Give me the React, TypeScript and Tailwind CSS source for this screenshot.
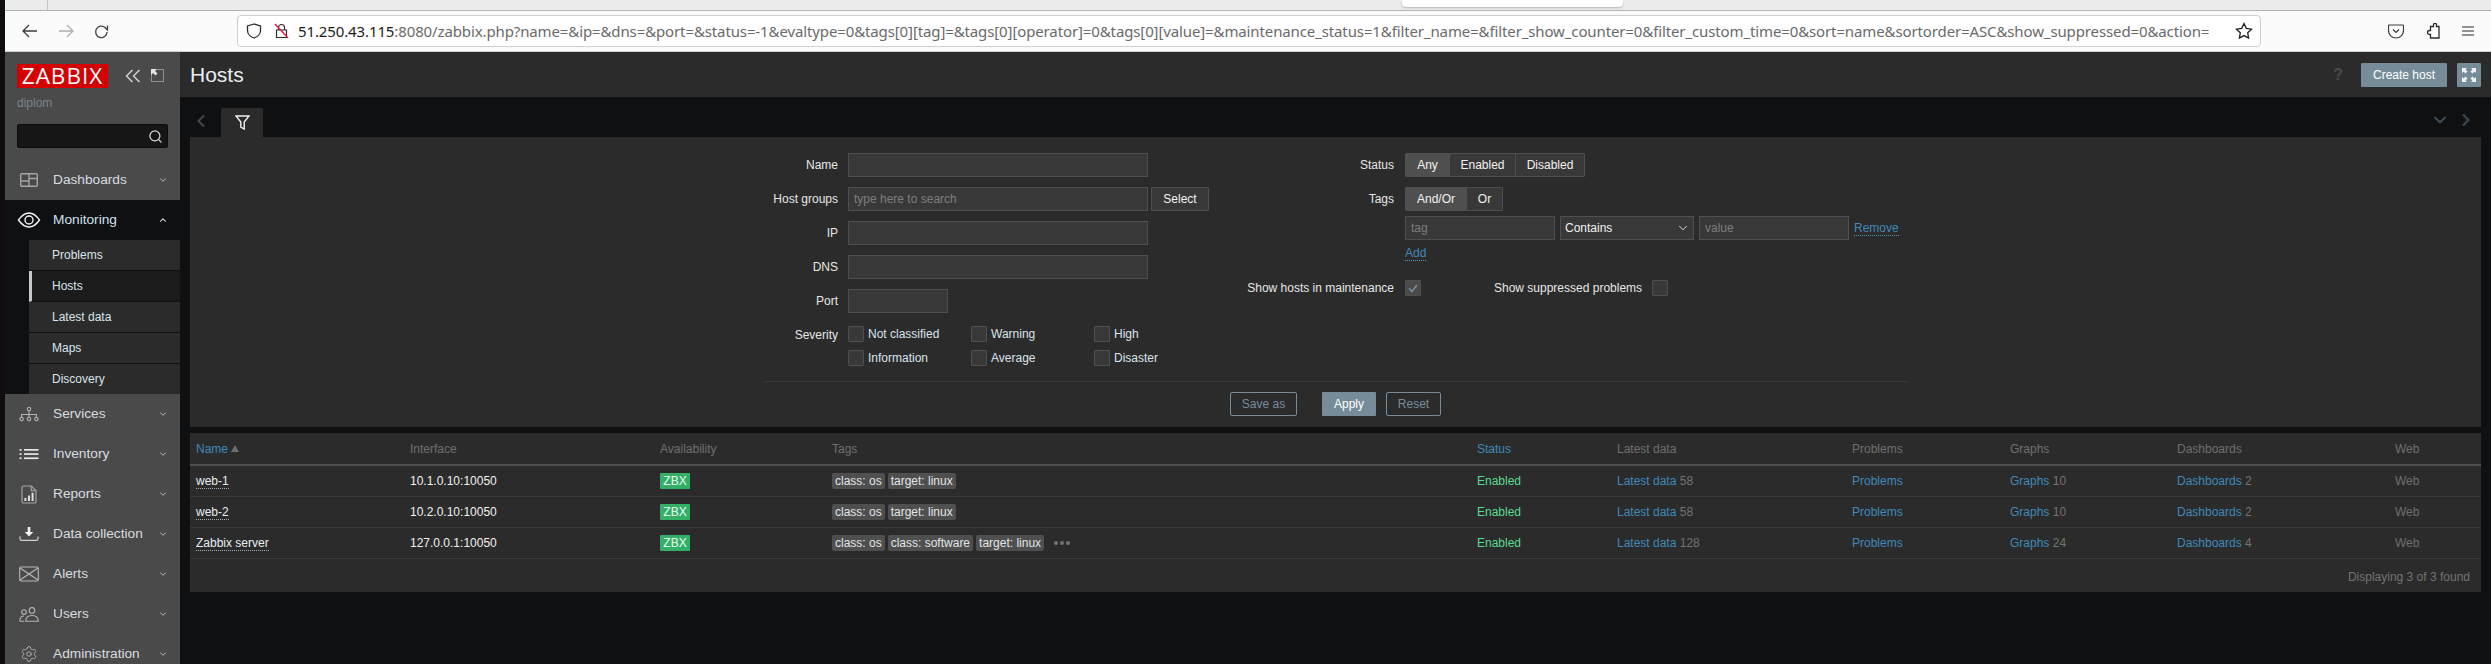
import { ReactNode } from 'react'
import { ChevronDown, ChevronLeft, ChevronRight, ChevronUp, Search, Settings } from 'lucide-react'

const arial = "font-['Liberation_Sans',Arial,sans-serif]"

function DashboardsIcon() {
  return (
    <svg width="20" height="16" viewBox="0 0 20 16" fill="none" stroke="#a5a5a5" strokeWidth="1.4">
      <rect x="1.7" y="1.7" width="16.6" height="12.6" rx="1" />
      <path d="M10 1.7v12.6M1.7 9h8.3M10 6.5h8.3" />
    </svg>
  )
}

function EyeIcon() {
  return (
    <svg width="24" height="16" viewBox="0 0 24 16" fill="none" stroke="#f2f2f2" strokeWidth="1.4">
      <path d="M1.5 8C5 3 8.5 1 12 1s7 2 10.5 7C19 13 15.5 15 12 15S5 13 1.5 8Z" />
      <circle cx="12" cy="8" r="4" />
    </svg>
  )
}

function ServicesIcon() {
  return (
    <svg width="20" height="16" viewBox="0 0 20 16" fill="none" stroke="#b5b5b5" strokeWidth="1.1">
      <circle cx="10" cy="3" r="1.7" />
      <circle cx="2.6" cy="13" r="1.7" />
      <circle cx="10" cy="13" r="1.7" />
      <circle cx="17.4" cy="13" r="1.7" />
      <path d="M10 4.7v6.6M2.6 11.3V8.5h14.8v2.8" />
    </svg>
  )
}

function InventoryIcon() {
  return (
    <svg width="20" height="12" viewBox="0 0 20 12" fill="#e8e8e8">
      <rect x="0.5" y="1" width="2" height="1.7" />
      <rect x="0.5" y="5.2" width="2" height="1.7" />
      <rect x="0.5" y="9.4" width="2" height="1.7" />
      <rect x="5" y="1" width="14.5" height="1.7" />
      <rect x="5" y="5.2" width="14.5" height="1.7" />
      <rect x="5" y="9.4" width="14.5" height="1.7" />
    </svg>
  )
}

function ReportsIcon() {
  return (
    <svg width="16" height="19" viewBox="0 0 16 19" fill="none" stroke="#a8a8a8" strokeWidth="1.1">
      <path d="M2.2 1h8l4.8 4.8v10.9a1.3 1.3 0 0 1-1.3 1.3H2.2A1.3 1.3 0 0 1 1 16.7V2.2A1.3 1.3 0 0 1 2.2 1Z" />
      <path d="M10.2 1v4.8H15" />
      <path d="M3.4 13h2v3h-2zM7 10.5h2V16H7zM10.6 7.8h2V16h-2z" fill="#e0e0e0" stroke="none" />
    </svg>
  )
}

function DownloadIcon() {
  return (
    <svg width="20" height="16" viewBox="0 0 20 16" fill="none">
      <path d="M1 10.5v2.2c0 .9.7 1.6 1.6 1.6h14.8c.9 0 1.6-.7 1.6-1.6v-2.2" stroke="#d0d0d0" strokeWidth="1.2" />
      <path d="M8.7 1h2.6v5h3l-4.3 4.4L5.7 6h3Z" fill="#f0f0f0" />
    </svg>
  )
}

function EnvelopeIcon() {
  return (
    <svg width="20" height="16" viewBox="0 0 20 16" fill="none" stroke="#b8b8b8" strokeWidth="1.1">
      <rect x="0.7" y="1" width="18.6" height="14" rx="1.5" />
      <path d="M1 2l9 6 9-6M1 14l9-6 9 6" />
    </svg>
  )
}

function UsersIcon() {
  return (
    <svg width="20" height="15" viewBox="0 0 20 15" fill="none" stroke="#b5b5b5" strokeWidth="1.1">
      <circle cx="13" cy="3.4" r="2.8" />
      <path d="M6.8 14.3c0-3.6 2.6-5.8 6.2-5.8s6.2 2.2 6.2 5.8Z" />
      <circle cx="5" cy="5" r="2.3" />
      <path d="M0.8 14.3c0-2.9 1.5-5.3 4.2-5.3M0.8 14.3h4.5" />
    </svg>
  )
}

function ExpandIcon() {
  return (
    <svg width="14" height="14" viewBox="0 0 14 14" fill="#f4f4f4">
      <path d="M0 0h5L3.5 1.5 5.5 3.5 3.5 5.5 1.5 3.5 0 5ZM14 0v5l-1.5-1.5-2 2-2-2 2-2L9 0ZM0 14V9l1.5 1.5 2-2 2 2-2 2L5 14ZM14 14H9l1.5-1.5-2-2 2-2 2 2L14 9Z" />
    </svg>
  )
}

function SideItem({ icon, label, open, dark }: { icon: ReactNode; label: string; open?: boolean; dark?: boolean }) {
  return (
    <div className={`flex h-10 shrink-0 items-center ${dark ? 'bg-[#0e1012] text-[#cfe1ee]' : 'text-[#d8dde0]'}`}>
      <span className="flex w-12 shrink-0 justify-center">{icon}</span>
      <span className="flex-1 text-[13.7px]">{label}</span>
      {open ? (
        <ChevronUp className="mr-[11px] h-[10px] w-[12px] text-white" strokeWidth={2.5} />
      ) : (
        <ChevronDown className="mr-[11px] h-[10px] w-[12px] text-[#cfcfcf]" strokeWidth={2} />
      )}
    </div>
  )
}

function Sidebar() {
  const submenu = ['Problems', 'Hosts', 'Latest data', 'Maps', 'Discovery']
  return (
    <aside className="flex w-[175px] shrink-0 flex-col overflow-hidden bg-[#4a4a4a]">
      <div className="flex shrink-0 items-start pl-3 pt-3">
        <div className="flex h-6 w-[91px] items-center justify-center bg-[#d40000] font-['Open_Sans',sans-serif] text-[22.5px] leading-none tracking-[1px] text-white">
          ZABBIX
        </div>
        <svg width="16" height="14" viewBox="0 0 16 14" fill="none" stroke="#d0d0d0" strokeWidth="1.5" className="ml-[17px] mt-[5px]">
          <path d="M7.5 1 1.5 7l6 6M14.5 1l-6 6 6 6" />
        </svg>
        <svg width="13" height="13" viewBox="0 0 13 13" fill="none" className="ml-[10px] mt-[5px]">
          <rect x="0.5" y="0.5" width="12" height="12" stroke="#d8d8d8" strokeDasharray="1 1" />
          <path d="M0 0h6L4 2l2.5 2.5-2 2L2 4 0 6Z" fill="#e6e6e6" />
        </svg>
      </div>
      <div className="ml-3 mt-[7px] shrink-0 text-xs leading-[16px] text-[#78848c]">diplom</div>
      <div className="ml-3 mt-[13px] flex h-6 w-[151px] shrink-0 items-center justify-end rounded-[2px] border border-[#0c0c0c] bg-[#161616] pr-[4px]">
        <Search className="h-[15px] w-[15px] text-[#d8d8d8]" strokeWidth={2} />
      </div>
      <div className="mt-3 shrink-0">
        <SideItem icon={<DashboardsIcon />} label="Dashboards" />
        <SideItem icon={<EyeIcon />} label="Monitoring" open dark />
      </div>
      <div className="flex h-[154px] shrink-0 bg-[#0e1012]">
        <div className="w-6 shrink-0" />
        <div className="flex flex-1 flex-col bg-[#2b2b2b]">
          {submenu.map((item, i) => (
            <div
              key={item}
              className={`flex items-center text-xs text-[#d9e4ec] ${i === 4 ? 'h-[30px]' : 'h-[31px] border-b border-[#101010]'} ${i === 1 ? 'border-l-[3px] border-l-[#c8c8c8] bg-[#1b1b1b] pl-[20px]' : 'pl-[23px]'}`}
            >
              {item}
            </div>
          ))}
        </div>
      </div>
      <SideItem icon={<ServicesIcon />} label="Services" />
      <SideItem icon={<InventoryIcon />} label="Inventory" />
      <SideItem icon={<ReportsIcon />} label="Reports" />
      <SideItem icon={<DownloadIcon />} label="Data collection" />
      <SideItem icon={<EnvelopeIcon />} label="Alerts" />
      <SideItem icon={<UsersIcon />} label="Users" />
      <SideItem icon={<Settings className="h-[18px] w-[18px] text-[#b5b5b5]" strokeWidth={1.2} />} label="Administration" />
    </aside>
  )
}

function Field({ label, children }: { label: string; children: ReactNode }) {
  return (
    <div className="flex h-6 items-center">
      <label className="w-[648px] shrink-0 text-right text-[#e6e6e6]">{label}</label>
      <div className="ml-[10px] flex items-center">{children}</div>
    </div>
  )
}

function TextInput({ width, placeholder }: { width: string; placeholder?: string }) {
  return (
    <input
      type="text"
      placeholder={placeholder}
      className={`${width} h-6 border border-[#4f4f4f] bg-[#383838] px-[5px] text-xs outline-none placeholder:text-[#7d7d7d]`}
    />
  )
}

function Check({ label, checked }: { label?: string; checked?: boolean }) {
  return (
    <div className="flex items-center">
      <span className={`flex h-4 w-4 items-center justify-center rounded-[1px] border border-[#4f4f4f] ${checked ? 'bg-[#4a4a4a]' : 'bg-[#383838]'}`}>
        {checked && (
          <svg width="10" height="9" viewBox="0 0 10 9" fill="none" stroke="#768d99" strokeWidth="1.7">
            <path d="M1 4.5 3.8 7.5 9 1" />
          </svg>
        )}
      </span>
      {label && <span className="ml-[4px] text-[#d9e4ec]">{label}</span>}
    </div>
  )
}

function Segments({ items }: { items: { label: string; width: string; active?: boolean }[] }) {
  return (
    <div className="flex h-6 rounded-[1px] border border-[#4f4f4f]">
      {items.map((item, i) => (
        <span
          key={item.label}
          className={`flex items-center justify-center ${item.width} ${item.active ? 'bg-[#4f4f4f]' : 'bg-[#383838]'} ${i > 0 ? 'border-l border-[#4f4f4f]' : ''} text-[#f2f2f2]`}
        >
          {item.label}
        </span>
      ))}
    </div>
  )
}

function OutlineButton({ label, width, className }: { label: string; width: string; className?: string }) {
  return (
    <button
      type="button"
      className={`flex h-6 ${width} items-center justify-center rounded-[2px] border border-[#768d99] text-[#768d99] ${className ?? ''}`}
    >
      {label}
    </button>
  )
}

function FilterPanel() {
  return (
    <section className="h-[290px] shrink-0 bg-[#2b2b2b] text-xs">
      <div className="flex h-[244px]">
        <div className="flex w-[1018px] shrink-0 flex-col gap-[10px] pt-4">
          <Field label="Name">
            <TextInput width="w-[300px]" />
          </Field>
          <Field label="Host groups">
            <TextInput width="w-[300px]" placeholder="type here to search" />
            <button type="button" className="ml-[3px] flex h-6 w-[58px] items-center justify-center rounded-[1px] border border-[#4f4f4f] bg-[#383838] text-[#f2f2f2]">
              Select
            </button>
          </Field>
          <Field label="IP">
            <TextInput width="w-[300px]" />
          </Field>
          <Field label="DNS">
            <TextInput width="w-[300px]" />
          </Field>
          <Field label="Port">
            <TextInput width="w-[100px]" />
          </Field>
          <div className="mt-[3px] flex">
            <div className="w-[648px] shrink-0 pt-[1px] text-right text-[#e6e6e6]">Severity</div>
            <div className="ml-[10px] grid grid-cols-[123px_123px_100px] gap-y-2">
              {['Not classified', 'Warning', 'High', 'Information', 'Average', 'Disaster'].map((s) => (
                <Check key={s} label={s} />
              ))}
            </div>
          </div>
        </div>
        <div className="flex flex-col pt-4">
          <div className="flex h-6 items-center">
            <span className="w-[186px] shrink-0 text-right text-[#e6e6e6]">Status</span>
            <div className="ml-[11px]">
              <Segments
                items={[
                  { label: 'Any', width: 'w-[43px]', active: true },
                  { label: 'Enabled', width: 'w-[66px]' },
                  { label: 'Disabled', width: 'w-[69px]' },
                ]}
              />
            </div>
          </div>
          <div className="mt-[10px] flex h-6 items-center">
            <span className="w-[186px] shrink-0 text-right text-[#e6e6e6]">Tags</span>
            <div className="ml-[11px]">
              <Segments
                items={[
                  { label: 'And/Or', width: 'w-[60px]', active: true },
                  { label: 'Or', width: 'w-[36px]' },
                ]}
              />
            </div>
          </div>
          <div className="ml-[197px] mt-[5px] flex h-6 items-center gap-[5px]">
            <TextInput width="w-[150px]" placeholder="tag" />
            <div className="flex h-6 w-[134px] items-center justify-between border border-[#4f4f4f] bg-[#383838] pl-[4px] pr-[3px] text-[#f2f2f2]">
              Contains
              <ChevronDown className="h-[14px] w-[14px]" strokeWidth={1.5} />
            </div>
            <TextInput width="w-[150px]" placeholder="value" />
            <span className="border-b border-dotted border-[#4796c4] leading-[14px] text-[#4089b8]">Remove</span>
          </div>
          <div className="ml-[197px] mt-[5px] flex h-4 items-center">
            <span className="border-b border-dotted border-[#4796c4] leading-[14px] text-[#4089b8]">Add</span>
          </div>
          <div className="mt-[19px] flex h-4 items-center">
            <span className="w-[186px] shrink-0 text-right text-[#e6e6e6]">Show hosts in maintenance</span>
            <span className="ml-[11px]">
              <Check checked />
            </span>
            <span className="ml-[73px] text-[#e6e6e6]">Show suppressed problems</span>
            <span className="ml-[10px]">
              <Check />
            </span>
          </div>
        </div>
      </div>
      <div className="ml-[573px] w-[1145px] border-t border-[#383838] pt-[10px]">
        <div className="ml-[467px] flex">
          <OutlineButton label="Save as" width="w-[67px]" />
          <button type="button" className="ml-[25px] flex h-6 w-[54px] items-center justify-center rounded-[1px] bg-[#768d99] text-white">
            Apply
          </button>
          <OutlineButton label="Reset" width="w-[55px]" className="ml-[10px]" />
        </div>
      </div>
    </section>
  )
}

const hosts = [
  { name: 'web-1', iface: '10.1.0.10:10050', tags: ['class: os', 'target: linux'], data: 58, graphs: 10, dash: 2 },
  { name: 'web-2', iface: '10.2.0.10:10050', tags: ['class: os', 'target: linux'], data: 58, graphs: 10, dash: 2 },
  { name: 'Zabbix server', iface: '127.0.0.1:10050', tags: ['class: os', 'class: software', 'target: linux'], data: 128, graphs: 24, dash: 4, more: true },
]

function Th({ children, blue }: { children: ReactNode; blue?: boolean }) {
  return <th className={`pl-[6px] text-left font-normal ${blue ? 'text-[#4089b8]' : 'text-[#6f6f6f]'}`}>{children}</th>
}

function HostTable() {
  const link = 'text-[#4089b8]'
  const count = 'text-[#737373]'
  return (
    <section className="mt-[6px] h-[159px] shrink-0 bg-[#2b2b2b] text-xs">
      <table className="w-full table-fixed border-collapse">
        <colgroup>
          <col className="w-[214px]" />
          <col className="w-[250px]" />
          <col className="w-[172px]" />
          <col className="w-[645px]" />
          <col className="w-[140px]" />
          <col className="w-[235px]" />
          <col className="w-[158px]" />
          <col className="w-[167px]" />
          <col className="w-[218px]" />
          <col />
        </colgroup>
        <thead>
          <tr className="h-[32px] border-b-2 border-[#4f4f4f]">
            <Th blue>
              <span className="flex items-center">
                Name
                <svg width="8" height="7" viewBox="0 0 8 7" fill="#6f6f6f" className="ml-[3px]">
                  <path d="M4 0l4 7H0Z" />
                </svg>
              </span>
            </Th>
            <Th>Interface</Th>
            <Th>Availability</Th>
            <Th>Tags</Th>
            <Th blue>Status</Th>
            <Th>Latest data</Th>
            <Th>Problems</Th>
            <Th>Graphs</Th>
            <Th>Dashboards</Th>
            <Th>Web</Th>
          </tr>
        </thead>
        <tbody>
          {hosts.map((h) => (
            <tr key={h.name} className="h-[31px] border-b border-[#383838]">
              <td className="pl-[6px]">
                <span className="inline-block border-b border-dotted border-[#9fb0bc] leading-[14px] text-[#e6eef3]">{h.name}</span>
              </td>
              <td className="pl-[6px] text-[#f0f0f0]">{h.iface}</td>
              <td className="pl-[6px]">
                <span className="flex h-4 w-[30px] items-center justify-center rounded-[1px] bg-[#34af67] text-[#e8fff0]">ZBX</span>
              </td>
              <td className="pl-[6px]">
                <div className="flex items-center gap-[3px]">
                  {h.tags.map((t) => (
                    <span key={t} className="flex h-4 items-center rounded-[2px] bg-[#4f4f4f] px-[3px] text-[#e0e6ea]">
                      {t}
                    </span>
                  ))}
                  {h.more && (
                    <span className="ml-[7px] flex gap-[2px]">
                      <i className="h-[4px] w-[4px] rounded-full bg-[#737373]" />
                      <i className="h-[4px] w-[4px] rounded-full bg-[#737373]" />
                      <i className="h-[4px] w-[4px] rounded-full bg-[#737373]" />
                    </span>
                  )}
                </div>
              </td>
              <td className="pl-[6px] text-[#59db8f]">Enabled</td>
              <td className="pl-[6px]">
                <span className={link}>Latest data</span> <span className={count}>{h.data}</span>
              </td>
              <td className={`pl-[6px] ${link}`}>Problems</td>
              <td className="pl-[6px]">
                <span className={link}>Graphs</span> <span className={count}>{h.graphs}</span>
              </td>
              <td className="pl-[6px]">
                <span className={link}>Dashboards</span> <span className={count}>{h.dash}</span>
              </td>
              <td className="pl-[6px] text-[#6f6f6f]">Web</td>
            </tr>
          ))}
        </tbody>
      </table>
      <div className="pr-[11px] pt-[10px] text-right text-[#737373]">Displaying 3 of 3 found</div>
    </section>
  )
}

function BrowserChrome() {
  const url =
    ':8080/zabbix.php?name=&ip=&dns=&port=&status=-1&evaltype=0&tags[0][tag]=&tags[0][operator]=0&tags[0][value]=&maintenance_status=1&filter_name=&filter_show_counter=0&filter_custom_time=0&sort=name&sortorder=ASC&show_suppressed=0&action='
  return (
    <header className="shrink-0 font-['Noto_Sans',sans-serif]">
      <div className="flex h-[11px] border-b border-[#b3b3b3] bg-[#ececec]">
        <div className="ml-[42px] h-full w-px bg-[#c4c4c4]" />
        <div className="ml-[1354px] h-[7px] w-[221px] rounded-b-[4px] bg-white shadow-[0_1px_2px_rgba(0,0,0,0.25)]" />
      </div>
      <div className="flex h-[41px] items-center border-b border-[#cfcfcf] bg-[#fbfbfb]">
        <svg width="16" height="14" viewBox="0 0 16 14" fill="none" stroke="#3c3c3c" strokeWidth="1.3" className="ml-[17px]">
          <path d="M15 7H1.5M7 1 1 7l6 6" />
        </svg>
        <svg width="16" height="14" viewBox="0 0 16 14" fill="none" stroke="#adadad" strokeWidth="1.3" className="ml-[20px]">
          <path d="M1 7h13.5M9 1l6 6-6 6" />
        </svg>
        <svg width="15" height="15" viewBox="0 0 15 15" fill="none" stroke="#3c3c3c" strokeWidth="1.3" className="ml-[20px]">
          <path d="M13 8a5.7 5.7 0 1 1-1.7-4.200L13.5 6V1.5" />
        </svg>
        <div className="relative ml-[128px] flex h-8 w-[2024px] items-center overflow-hidden rounded-[4px] border border-[#cfcfcf] bg-white">
          <svg width="16" height="16" viewBox="0 0 16 16" fill="none" stroke="#2b2b2b" strokeWidth="1.3" className="ml-[8px] shrink-0">
            <path d="M8 1 1.5 3v4.5C1.5 11 4.5 14 8 15c3.5-1 6.5-4 6.5-7.5V3Z" />
          </svg>
          <svg width="15" height="16" viewBox="0 0 15 16" fill="none" strokeWidth="1.2" className="ml-[12px] shrink-0">
            <path d="M4.5 7V4.5a3 3 0 0 1 6 0V7M2.5 7h10v7.5h-10Z" stroke="#2b2b2b" />
            <path d="M1 1l13 14" stroke="#e3224d" strokeWidth="1.5" />
          </svg>
          <div className="ml-[9px] flex-1 overflow-hidden whitespace-nowrap text-[15px] tracking-[-0.12px] text-[#6a6a6a]">
            <span className="text-[#1c1c1c]">51.250.43.115</span>
            {url}
          </div>
          <div className="absolute right-[30px] top-0 h-full w-5 bg-gradient-to-r from-white/0 to-white" />
          <svg width="18" height="18" viewBox="0 0 18 18" fill="none" stroke="#1f1f1f" strokeWidth="1.3" className="ml-[6px] mr-[7px] shrink-0">
            <path d="m9 1.5 2.3 4.9 5.2.7-3.8 3.7.9 5.3L9 13.6l-4.6 2.500.9-5.300L1.500 7.100l5.200-.700Z" />
          </svg>
        </div>
        <svg width="16" height="15" viewBox="0 0 16 15" fill="none" stroke="#3c3c3c" strokeWidth="1.2" className="ml-[127px]">
          <path d="M1.5 1h13a1 1 0 0 1 1 1v4.500a7.500 7.500 0 0 1-15 0V2a1 1 0 0 1 1-1Z" />
          <path d="m5 5.500 3 3 3-3" />
        </svg>
        <svg width="15" height="16" viewBox="0 0 15 16" fill="none" stroke="#2b2b2b" strokeWidth="1.3" className="ml-[21px]">
          <path d="M5.500 3.500h3V1.800a1.500 1.500 0 0 1 3 0v1.700H14V15H5.500v-3.500h-1a2 2 0 0 1 0-4h1Z" />
        </svg>
        <svg width="14" height="10" viewBox="0 0 14 10" fill="none" stroke="#2b2b2b" strokeWidth="1.2" className="ml-[21px]">
          <path d="M1 1h12M1 5h12M1 9h12" />
        </svg>
      </div>
    </header>
  )
}

export default function App() {
  return (
    <div className={`flex h-[664px] w-[2491px] overflow-hidden bg-[#0e1012] ${arial}`}>
      <div className="w-[5px] shrink-0 bg-[#100c10]" />
      <div className="flex min-w-0 flex-1 flex-col">
        <BrowserChrome />
        <div className="flex min-h-0 flex-1">
          <Sidebar />
          <main className="flex min-w-0 flex-1 flex-col">
            <div className="flex h-[45px] shrink-0 items-center bg-[#2b2b2b] pl-[10px] pr-[10px]">
              <h1 className="flex-1 text-[21px] font-normal text-[#e9edf0]">Hosts</h1>
              <span className="mr-[18px] text-[16px] font-bold text-[#4a4a4a]">?</span>
              <button type="button" className="flex h-6 w-[86px] items-center justify-center rounded-[1px] bg-[#768d99] text-xs text-white">
                Create host
              </button>
              <span className="ml-[10px] flex h-6 w-6 items-center justify-center rounded-[1px] bg-[#768d99]">
                <ExpandIcon />
              </span>
            </div>
            <div className="flex flex-1 flex-col px-[10px]">
              <div className="flex h-10 shrink-0 items-end">
                <ChevronLeft className="mb-[6px] ml-[1px] h-[20px] w-[20px] text-[#3d4a54]" strokeWidth={2.5} />
                <span className="ml-[10px] flex h-[29px] w-[42px] items-center justify-center rounded-t-[2px] bg-[#2b2b2b]">
                  <svg width="15" height="15" viewBox="0 0 15 15" fill="none" stroke="#f2f2f2" strokeWidth="1.4">
                    <path d="M1 1h13L9.2 7v7L5.8 12V7Z" />
                  </svg>
                </span>
                <span className="flex-1" />
                <ChevronDown className="mb-[7px] h-[20px] w-[20px] text-[#3d4a54]" strokeWidth={2.5} />
                <ChevronRight className="mb-[7px] ml-[6px] mr-[5px] h-[20px] w-[20px] text-[#3d4a54]" strokeWidth={2.5} />
              </div>
              <FilterPanel />
              <HostTable />
            </div>
          </main>
        </div>
      </div>
    </div>
  )
}
